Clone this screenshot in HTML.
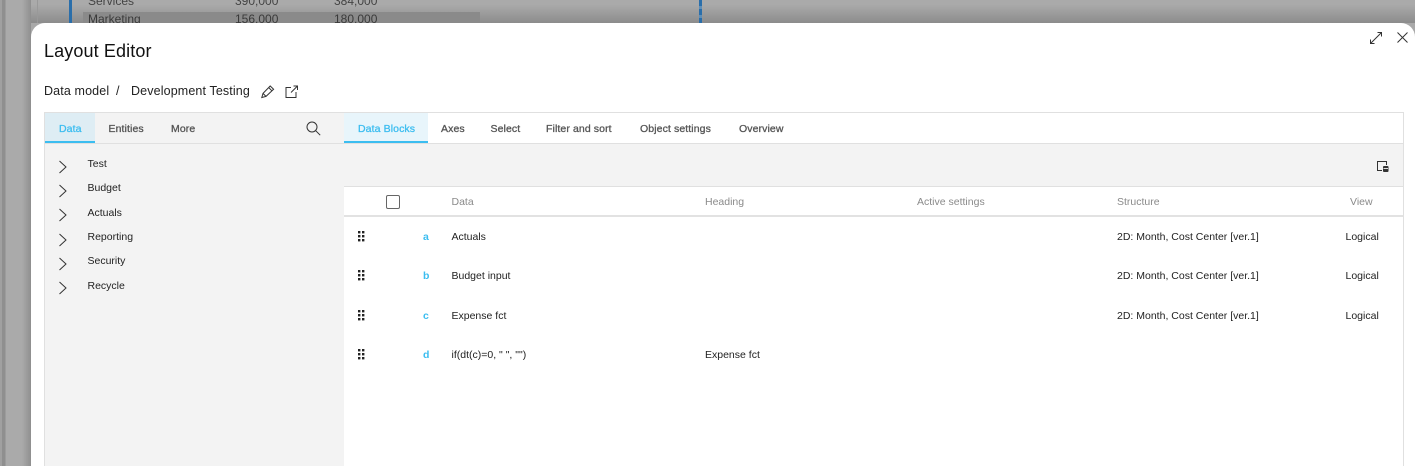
<!DOCTYPE html>
<html><head><meta charset="utf-8">
<style>
html,body{margin:0;padding:0}
body{width:1415px;height:466px;overflow:hidden;position:relative;background:#a9a9a9;font-family:"Liberation Sans",sans-serif;color:#222}
.a{position:absolute;white-space:nowrap}
.t{font-size:10.5px;line-height:14px;color:#222}
.h{font-size:10.5px;line-height:14px;color:#8a8a8a}
.tab{font-size:10.5px;line-height:14px;color:#555;-webkit-text-stroke:.3px currentColor;letter-spacing:.1px}
.l{font-size:10.5px;line-height:14px;color:#222;left:87.5px}
.k{font-size:10.5px;line-height:14px;font-weight:bold;color:#3bbdf0;left:423px}
.bc{font-size:12.5px;line-height:15px;color:#222;top:83.5px;letter-spacing:.13px}
svg{position:absolute;overflow:visible;fill:none}
svg.d{fill:#222}
</style></head><body>
<div class="a" style="left:0;top:0;width:1415px;height:23px;background:linear-gradient(#aaa 20%,#8c8c8c)"></div>
<div class="a" style="left:0;top:0;width:31px;height:466px;background:linear-gradient(90deg,#a0a0a0 0,#a0a0a0 2px,#8f8f8f 2px,#8f8f8f 5px,#aaa 6px,#aaa 22px,#8f8f8f 31px)"></div>
<div class="a" style="left:37px;top:0;width:1px;height:23px;background:#999"></div>
<div class="a" style="left:69px;top:0;width:2.5px;height:23px;background:#2a6eaa"></div>
<div class="a" style="left:699px;top:0;width:3px;height:23px;background:repeating-linear-gradient(#2a6eaa 0 6px,#5f8fb8 6px 9px)"></div>
<div class="a" style="left:83px;top:12px;width:397px;height:11px;background:#8a8a8a"></div>
<div class="a" style="left:88px;top:-6px;font-size:12px;line-height:14px;color:#444">Services</div>
<div class="a" style="left:235px;top:-6px;font-size:12px;line-height:14px;color:#444">390,000</div>
<div class="a" style="left:334px;top:-6px;font-size:12px;line-height:14px;color:#444">384,000</div>
<div class="a" style="left:88px;top:12px;font-size:12px;line-height:14px;color:#3a3a3a">Marketing</div>
<div class="a" style="left:235px;top:12px;font-size:12px;line-height:14px;color:#3a3a3a">156,000</div>
<div class="a" style="left:334px;top:12px;font-size:12px;line-height:14px;color:#3a3a3a">180,000</div>

<div class="a" style="left:31px;top:23px;width:1384px;height:443px;background:#fff;border-radius:14px 14px 0 0"></div>

<div class="a" style="left:44px;top:41px;font-size:18px;line-height:21px;color:#111;letter-spacing:.12px">Layout Editor</div>
<div class="a bc" style="left:44px">Data model</div>
<div class="a bc" style="left:116px">/</div>
<div class="a bc" style="left:131px">Development Testing</div>
<svg style="left:261px;top:85px" width="13" height="13" viewBox="0 0 13 13" stroke="#333" stroke-width="1"><path d="M.8 12.5 2 8.4 9.2 1 12.6 4.2 5 11.4ZM2 8.4 5 11.4M7.8 2.6 10.9 5.8"/></svg>
<svg style="left:285px;top:85px" width="13" height="13" viewBox="0 0 13 13" stroke="#333" stroke-width="1"><path d="M6 2.5H1V12.5H11V7M6 7.5 12 1.5M8.5 1H12.5V5"/></svg>
<svg style="left:1369px;top:31px" width="14" height="14" viewBox="0 0 14 14" stroke="#333" stroke-width="1"><path d="M1.5 12.5 12.5 1.5M8.5 1.5H12.5V5.5M1.5 8.5V12.5H5.5"/></svg>
<svg style="left:1397px;top:32px" width="11" height="11" viewBox="0 0 11 11" stroke="#333" stroke-width="1"><path d="M.5.5 10.5 10.5M10.5.5 .5 10.5"/></svg>

<div class="a" style="left:44px;top:112px;width:1360px;height:354px;border:1px solid #e0e0e0;border-bottom:0;box-sizing:border-box"></div>
<div class="a" style="left:45px;top:113px;width:299px;height:353px;background:#f3f3f3"></div>
<div class="a" style="left:45px;top:143px;width:299px;height:1px;background:#e0e0e0"></div>
<div class="a" style="left:45px;top:113px;width:50px;height:30px;background:#deedf4;box-shadow:inset 0 -2px 0 #3bbdf0"></div>
<div class="a tab" style="left:59px;top:122px;color:#3bbdf0">Data</div>
<div class="a tab" style="left:108.5px;top:122px">Entities</div>
<div class="a tab" style="left:171px;top:122px">More</div>
<svg style="left:306px;top:121px" width="15" height="15" viewBox="0 0 15 15" stroke="#333" stroke-width="1"><circle cx="6" cy="6" r="5"/><path d="M9.7 9.7 14.2 14.2"/></svg>

<div class="a" style="left:344px;top:143px;width:1059px;height:1px;background:#e0e0e0"></div>
<div class="a" style="left:344px;top:113px;width:84px;height:30px;background:#e8f5fb;box-shadow:inset 0 -2px 0 #3bbdf0"></div>
<div class="a tab" style="left:358px;top:122px;color:#3bbdf0">Data Blocks</div>
<div class="a tab" style="left:441px;top:122px">Axes</div>
<div class="a tab" style="left:490.5px;top:122px">Select</div>
<div class="a tab" style="left:546px;top:122px">Filter and sort</div>
<div class="a tab" style="left:640px;top:122px">Object settings</div>
<div class="a tab" style="left:739px;top:122px">Overview</div>

<div class="a" style="left:344px;top:144px;width:1059px;height:42px;background:#f3f3f3"></div>
<div class="a" style="left:344px;top:186px;width:1059px;height:1px;background:#e0e0e0"></div>
<div class="a" style="left:344px;top:215px;width:1059px;height:2px;background:#e2e2e2"></div>
<svg style="left:1377px;top:161px" width="12" height="12" viewBox="0 0 12 12" stroke="#333" stroke-width="1"><path d="M5 9.5H.5V.5H9.5V4"/><rect x="6" y="5" width="5.5" height="6" rx="1" fill="#333" stroke="none"/><path d="M6.5 7.5H11" stroke="#ddd"/></svg>

<div class="a" style="left:386px;top:195px;width:14px;height:14px;border:1px solid #666;border-radius:2px;box-sizing:border-box"></div>
<div class="a h" style="left:451.5px;top:195px">Data</div>
<div class="a h" style="left:705px;top:195px">Heading</div>
<div class="a h" style="left:917px;top:195px">Active settings</div>
<div class="a h" style="left:1117px;top:195px">Structure</div>
<div class="a h" style="left:1350px;top:195px">View</div>

<svg style="left:58px;top:160px" width="10" height="160" viewBox="0 0 10 160" stroke="#333" stroke-width="1"><path d="M1.5 1 8 7 1.5 13M1.5 25 8 31 1.5 37M1.5 49 8 55 1.5 61M1.5 74 8 80 1.5 86M1.5 98 8 104 1.5 110M1.5 122 8 128 1.5 134"/></svg>
<div class="a l" style="top:157px">Test</div>
<div class="a l" style="top:181px">Budget</div>
<div class="a l" style="top:206px">Actuals</div>
<div class="a l" style="top:230px">Reporting</div>
<div class="a l" style="top:254px">Security</div>
<div class="a l" style="top:279px">Recycle</div>

<svg class="d" style="left:358px;top:231px" width="7" height="130" viewBox="0 0 7 130">
<g><rect x="0" y="0" width="2.4" height="2.4"/><rect x="4" y="0" width="2.4" height="2.4"/><rect x="0" y="4" width="2.4" height="2.4"/><rect x="4" y="4" width="2.4" height="2.4"/><rect x="0" y="8" width="2.4" height="2.4"/><rect x="4" y="8" width="2.4" height="2.4"/></g>
<g transform="translate(0,39)"><rect x="0" y="0" width="2.4" height="2.4"/><rect x="4" y="0" width="2.4" height="2.4"/><rect x="0" y="4" width="2.4" height="2.4"/><rect x="4" y="4" width="2.4" height="2.4"/><rect x="0" y="8" width="2.4" height="2.4"/><rect x="4" y="8" width="2.4" height="2.4"/></g>
<g transform="translate(0,79)"><rect x="0" y="0" width="2.4" height="2.4"/><rect x="4" y="0" width="2.4" height="2.4"/><rect x="0" y="4" width="2.4" height="2.4"/><rect x="4" y="4" width="2.4" height="2.4"/><rect x="0" y="8" width="2.4" height="2.4"/><rect x="4" y="8" width="2.4" height="2.4"/></g>
<g transform="translate(0,118)"><rect x="0" y="0" width="2.4" height="2.4"/><rect x="4" y="0" width="2.4" height="2.4"/><rect x="0" y="4" width="2.4" height="2.4"/><rect x="4" y="4" width="2.4" height="2.4"/><rect x="0" y="8" width="2.4" height="2.4"/><rect x="4" y="8" width="2.4" height="2.4"/></g>
</svg>

<div class="a k" style="top:230px">a</div>
<div class="a t" style="left:451.5px;top:230px">Actuals</div>
<div class="a t" style="left:1117px;top:230px">2D: Month, Cost Center [ver.1]</div>
<div class="a t" style="left:1345.5px;top:230px">Logical</div>

<div class="a k" style="top:269px">b</div>
<div class="a t" style="left:451.5px;top:269px">Budget input</div>
<div class="a t" style="left:1117px;top:269px">2D: Month, Cost Center [ver.1]</div>
<div class="a t" style="left:1345.5px;top:269px">Logical</div>

<div class="a k" style="top:309px">c</div>
<div class="a t" style="left:451.5px;top:309px">Expense fct</div>
<div class="a t" style="left:1117px;top:309px">2D: Month, Cost Center [ver.1]</div>
<div class="a t" style="left:1345.5px;top:309px">Logical</div>

<div class="a k" style="top:348px">d</div>
<div class="a t" style="left:451.5px;top:348px">if(dt(c)=0, " ", "")</div>
<div class="a t" style="left:705px;top:348px">Expense fct</div>
</body></html>
